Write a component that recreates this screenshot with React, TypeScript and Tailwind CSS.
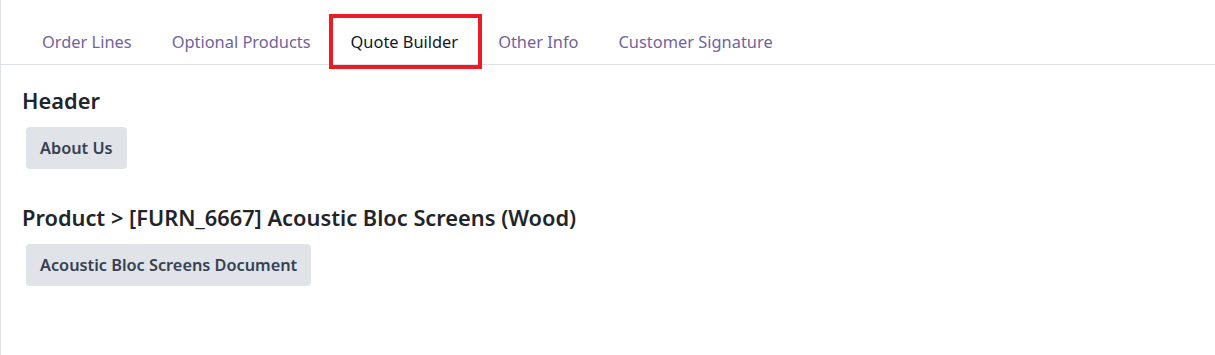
const tabs = ["Order Lines", "Optional Products", "Quote Builder", "Other Info", "Customer Signature"];

const Section = ({ title, doc }: { title: string; doc: string }) => {
  return (
    <div className="flex flex-col items-start">
      <h3 className="text-[21.8px] leading-[28px] font-semibold text-[#212529]">{title}</h3>
      <button className="mt-[12px] ml-[4px] h-[42px] px-[14px] rounded-[4px] bg-[#e0e3e7] text-[16.3px] leading-[42px] font-semibold text-[#374151]">
        {doc}
      </button>
    </div>
  );
};

const App = () => {
  return (
    <div
      className="w-[1215px] h-[355px] bg-white border-l border-[#dee2e6] overflow-hidden"
      style={{ fontFamily: '"Noto Sans", "Open Sans", sans-serif' }}
    >
      <ul className="flex pl-[21px] pt-[20px] border-b border-[#dee2e6]">
        {tabs.map((t) => (
          <li
            key={t}
            className={
              "relative h-[44px] px-5 flex items-center text-[16.4px] " +
              (t === "Quote Builder" ? "text-[#111827]" : "text-[#71639e]")
            }
          >
            {t}
            {t === "Quote Builder" && (
              <span className="absolute left-[-2px] right-[-4px] top-[-6px] bottom-[-5px] border-4 border-[#ed1c24]" />
            )}
          </li>
        ))}
      </ul>
      <div className="pl-[21px] pt-[22px] flex flex-col gap-[35px]">
        <Section title="Header" doc="About Us" />
        <Section title="Product > [FURN_6667] Acoustic Bloc Screens (Wood)" doc="Acoustic Bloc Screens Document" />
      </div>
    </div>
  );
};

export default App;
